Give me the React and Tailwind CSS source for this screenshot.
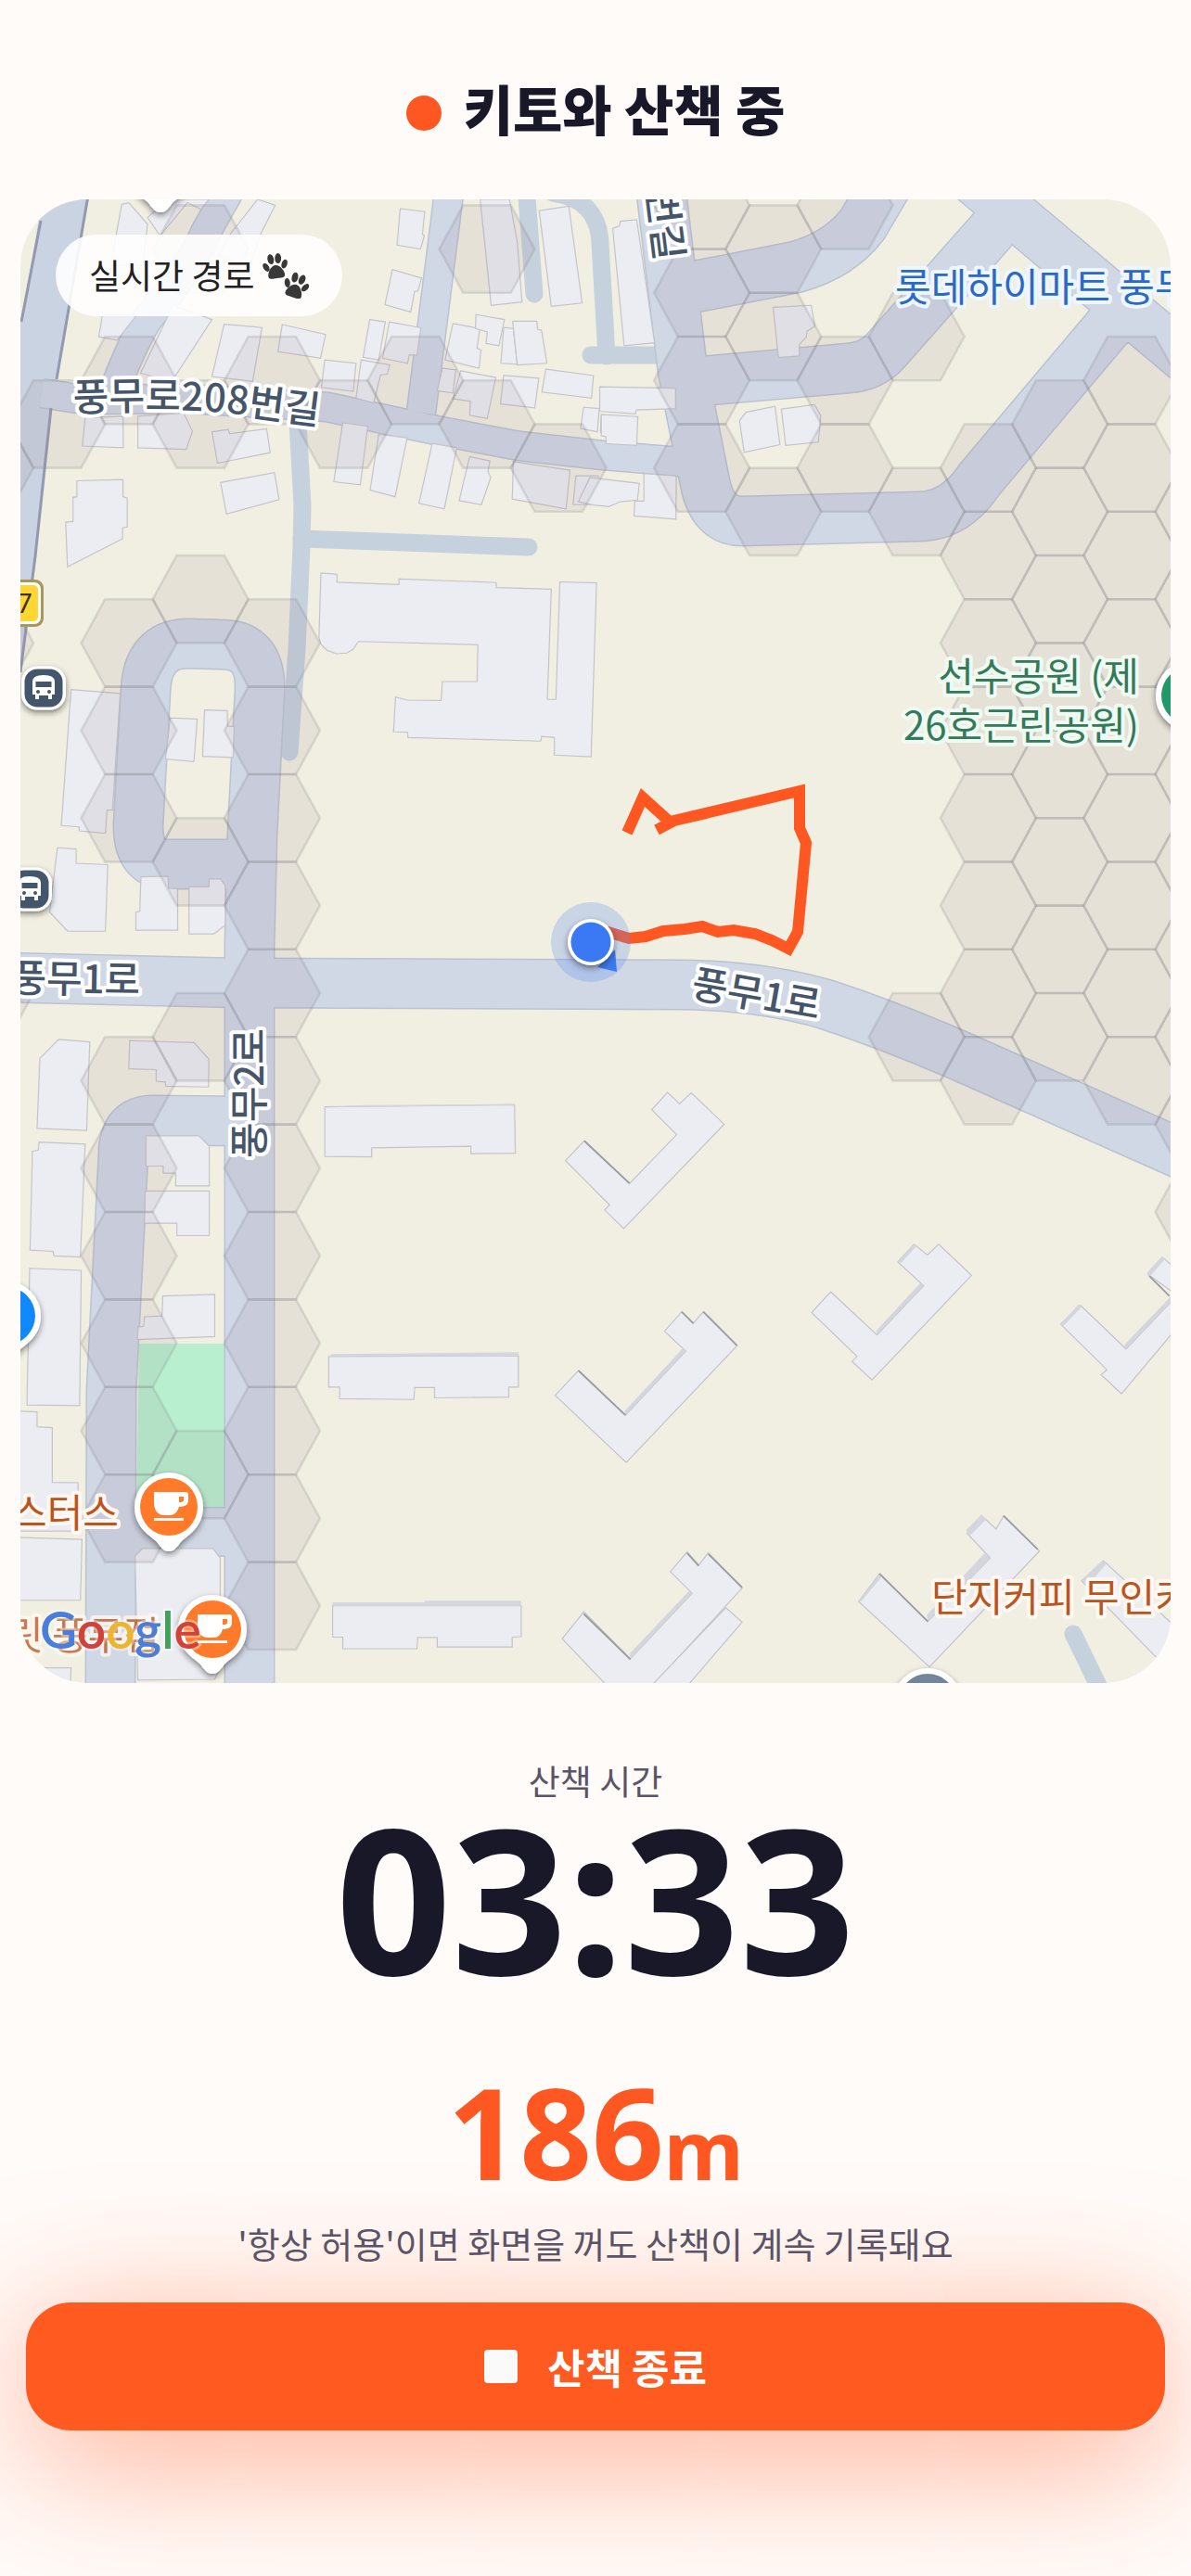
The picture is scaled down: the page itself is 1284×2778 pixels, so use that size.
import React from 'react';

const HEX_W = 77.2;
const HEX_H = 94.4;

// column index -> visited rows
const HEX_CELLS = {
  '-7': [2, 4, 8],
  '-6': [2],
  '-5': [1, 4, 5, 6, 9, 10, 11, 12, 13, 14],
  '-4': [0, 2, 4, 7, 9, 14],
  '-3': [1, 4, 5, 6, 7, 8, 9, 10, 11, 12, 13, 14, 15],
  '-2': [2],
  '-1': [1],
  0: [0, 2],
  1: [2],
  3: [-1, 0, 1, 2],
  4: [0, 1, 3],
  5: [-1, 1, 2],
  6: [1, 3, 9],
  7: [2, 3, 4, 5, 6, 7, 8, 9],
  8: [2, 3, 4, 5, 6, 7, 8, 9],
  9: [1, 2, 3, 4, 5, 6, 7, 8, 9],
  10: [3, 4, 5, 6, 7, 8, 9, 10, 11],
};

const ROADS = [
  { d: 'M45 424 L90 431 L200 430 L353 439 L470 464 L560 481 L650 491 L745 499', w: 30 },
  { d: 'M250 200 L222 250 Q205 290 159 344 Q140 375 122 425', w: 31 },
  { d: 'M485 200 L454 445', w: 30 },
  { d: 'M269 1830 L269 1020 L272 900 L280 745 Q282 695 238 695 L202 694 Q159 695 157 745 L149 890 Q149 932 180 932 L272 932', w: 52 },
  { d: 'M0 1054 L260 1060 L735 1062 Q820 1063 890 1083 Q960 1106 1040 1141 L1290 1252', w: 52 },
  { d: 'M268 1209 L165 1208 Q133 1208 133 1245 L120 1500 L119 1830', w: 52 },
  { d: 'M119 1652 L268 1652', w: 51 },
  { d: 'M712 200 L736 400 L760 520 Q768 562 800 562 L992 557 Q1030 556 1056 517 L1195 352 L1225 330', w: 52 },
  { d: 'M1030 178 L1290 397', w: 51 },
  { d: 'M1085 228 L1068 250 L955 378 Q940 395 915 397 L745 412', w: 52 },
  { d: 'M740 311 L858 288 Q905 275 930 242 L956 198', w: 54 },
];

const LANES = [
  'M567 200 L576 317',
  'M596 208 Q645 215 647 262 L654 384',
  'M637 383 L706 383',
  'M321 455 L326 545 L325 590 L320 700 L312 811',
  'M325 581 L570 590',
  'M1157 1762 L1190 1830',
];

const TILES = [
  {
    transform: 'translate(0 40) scale(.4209 .3571)',
    buildings: [
      '312,505 330,500 378,565 365,690 283,690',
      '378,545 430,490 535,490 515,520 480,500 410,600',
      '593,590 660,490 705,508 665,600 640,700 560,660',
      '262,840 350,840 300,915 253,905',
      '1025,518 1088,527 1082,595 1087,600 1077,640 1017,628',
      '1005,702 1080,728 1070,768 1062,768 1052,830 986,808',
      '1230,490 1305,490 1325,620 1337,800 1258,810',
      '1381,524 1457,511 1491,803 1412,813',
      '947,853 987,860 970,975 930,967',
      '997,860 1078,878 1068,960 1048,960 1044,985 980,970',
      '1160,865 1229,880 1222,940 1232,945 1227,1000 1140,975',
      '1219,838 1292,853 1278,932 1245,925 1248,890 1218,880',
      '1290,877 1315,880 1325,988 1283,985',
      '1313,858 1375,858 1377,883 1387,885 1401,985 1325,990',
      '443,810 543,853 440,1040 360,1015',
      '574,867 671,877 647,1040 543,1025',
      '723,868 834,898 821,970 758,958 712,950',
      '832,975 912,985 905,1070 823,1058',
      '925,975 998,990 992,1018 975,1020 957,1105 912,1090',
      '1133,1000 1168,1005 1160,1075 1120,1068',
      '1180,1008 1270,1028 1248,1152 1203,1142 1205,1100 1160,1092',
      '1290,1022 1380,1030 1370,1120 1282,1108',
      '1398,1003 1520,1022 1515,1090 1388,1072',
      '1495,1118 1535,1122 1530,1192 1487,1182',
      '1538,1060 1600,1062 1600,1130 1536,1122',
      '1540,1145 1600,1145 1600,1225 1555,1225 1552,1195 1538,1192',
      '218,1150 315,1145 316,1240 211,1235',
      '353,1145 470,1135 493,1190 477,1245 353,1240',
      '543,1192 585,1185 588,1198 683,1183 692,1255 557,1287',
      '565,1345 703,1315 715,1397 580,1440',
      '197,1340 315,1336 315,1388 326,1392 326,1480 314,1482 314,1515 173,1600 168,1465 187,1463 187,1390 197,1388',
      '878,1165 942,1175 923,1352 855,1343',
      '970,1200 1043,1210 1012,1388 948,1368',
      '1107,1227 1170,1240 1138,1425 1073,1408',
      '1203,1267 1255,1280 1250,1312 1257,1330 1233,1412 1176,1400',
      '1315,1282 1460,1308 1450,1425 1312,1395',
      '1475,1325 1532,1325 1535,1345 1555,1345 1555,1412 1468,1412',
    ],
  },
  {
    transform: 'translate(640 200) scale(.4107 .3571)',
    buildings: [
      '50,130 68,122 70,108 113,103 160,475 80,484',
      '471,368 571,362 581,425 560,440 558,458 540,480 540,515 485,520',
      '383,710 400,685 476,667 489,783 395,806',
      '493,675 580,662 596,695 590,775 504,785',
      '16,608 215,612 215,674 112,678 110,690 16,682',
      '20,692 116,698 113,785 33,780 32,758 20,756',
      '132,870 217,877 216,1008 106,998 108,953 132,953',
      '-10,882 120,900 115,950 70,955 40,970 0,965 -40,955',
    ],
  },
  {
    transform: 'translate(0 580) scale(.4209 .3571)',
    buildings: [
      '822,106 863,110 863,134 1022,141 1022,124 1271,135 1271,150 1412,155 1402,488 1424,488 1434,133 1528,136 1514,661 1420,656 1420,603 1387,600 1385,614 1045,603 1044,587 1008,586 1013,481 1044,490 1130,491 1133,434 1222,434 1224,323 918,313 905,336 888,348 862,350 838,340 822,322 817,300',
      '182,458 308,470 288,822 274,822 270,892 203,885 203,873 157,869',
      '436,544 505,547 497,676 424,668',
      '524,520 582,522 583,568 600,570 597,663 519,660',
      '147,936 195,940 195,983 276,987 270,1188 173,1188 127,1130',
      '361,1024 430,1022 432,1058 455,1060 455,1185 348,1185 348,1130 358,1128',
      '484,1054 535,1054 536,1030 565,1030 577,1050 577,1170 548,1196 484,1196',
    ],
  },
  {
    transform: 'translate(0 1120) scale(.4209 .4464)',
    buildings: [
      '150,2 230,8 222,222 95,217 102,48',
      '332,5 497,10 535,50 534,117 425,115 423,105 400,103 400,75 330,73',
      '374,235 510,235 536,260 536,356 450,356 450,325 418,325 418,308 374,308',
      '372,368 536,368 536,476 453,476 453,446 370,446',
      '417,622 550,618 550,720 352,727 354,697 368,695 370,672 415,670',
      '100,250 218,255 206,528 138,525 136,514 77,511 83,272 98,270',
      '76,555 208,560 204,887 69,885',
      '40,900 95,902 95,938 134,940 134,1072 200,1073 198,1190 40,1190',
      '40,1205 210,1210 206,1357 40,1357',
      '40,1520 182,1520 180,1568 40,1568',
      '365,1232 545,1232 564,1255 564,1520 550,1548 353,1550 346,1250',
      '832,165 1318,160 1320,277 1206,278 1206,260 952,264 952,286 832,285',
      '842,768 1328,766 1328,842 1303,842 1303,866 1113,868 1113,843 1062,843 1060,872 870,870 870,842 842,842',
      '852,1370 1335,1370 1335,1445 1312,1446 1312,1470 1120,1470 1120,1447 1070,1447 1068,1474 878,1474 878,1446 852,1446',
    ],
    shades: [
      '842,768 850,762 1328,758 1328,766',
      '852,1371 852,1362 1088,1362 1088,1358 1335,1358 1335,1371',
      '832,166 934,161 1318,158 1318,161',
    ],
  },
  {
    transform: 'translate(580 1120) scale(.449 .4464)',
    buildings: [
      '66,295 111,247 220,350 333,232 273,172 311,130 340,158 368,131 447,207 206,459 160,414 172,402',
      '41,862 97,802 210,910 355,755 304,707 345,660 373,688 397,660 478,742 212,1024',
      '657,662 703,612 814,716 926,597 864,540 903,497 935,523 962,497 1041,572 802,825 754,780 766,768',
      '1255,690 1303,645 1412,750 1535,620 1465,570 1502,530 1600,620 1401,858 1352,812 1366,800',
      '58,1450 110,1385 222,1498 370,1340 318,1288 358,1240 386,1272 409,1242 490,1328 270,1568 170,1568',
      '451,1375 490,1410 355,1568 268,1568',
      '770,1360 820,1293 936,1408 1086,1255 1030,1195 1065,1152 1100,1185 1118,1153 1204,1238 940,1518',
      '1305,1310 1358,1262 1540,1430 1520,1520 1480,1490',
    ],
    shades: [
      '864,540 903,497 910,500 872,542',
      '814,716 926,597 918,590 812,706',
      '1412,750 1535,620 1520,622 1408,740',
      '1255,690 1298,642 1306,648 1262,694',
      '1462,566 1498,526 1506,532 1470,574',
      '210,910 355,755 348,748 208,900',
      '222,1498 370,1340 362,1335 220,1486',
      '770,1360 820,1293 824,1302 776,1360',
      '936,1408 1086,1255 1072,1244 934,1392',
      '1028,1188 1065,1150 1076,1162 1036,1202',
      '1305,1310 1355,1260 1364,1270 1322,1318',
    ],
    edges: [
      '111,247 220,350',
      '97,802 210,910',
      '397,660 478,742',
      '345,660 373,688',
      '110,1390 222,1500',
      '409,1245 490,1326',
      '358,1243 386,1274',
      '820,1293 936,1408',
      '1118,1153 1200,1234',
      '1468,574 1516,622',
    ],
  },
];

const HexGrid = () => (
  <g fill="#927b88" fillOpacity=".12" stroke="#7c7c80" strokeOpacity=".2" strokeWidth="2.6">
    {Object.entries(HEX_CELLS).flatMap(([col, rows]) =>
      rows.map((row) => {
        const i = Number(col);
        const cx = 525 + HEX_W * i;
        const cy = 268.6 + HEX_H * row + (i % 2 !== 0 ? HEX_H / 2 : 0);
        const h = HEX_H / 2;
        const points = [
          [cx - 51.5, cy],
          [cx - 25.7, cy - h],
          [cx + 25.7, cy - h],
          [cx + 51.5, cy],
          [cx + 25.7, cy + h],
          [cx - 25.7, cy + h],
        ].join(' ');
        return <polygon key={`${col}:${row}`} points={points} />;
      })
    )}
  </g>
);

const Pin = ({ x, y, color, children }) => (
  <g transform={`translate(${x} ${y})`}>
    <path
      d="M0 48 C-6 48 -9 43 -13 38 C-18 32 -37 24 -37 0 A37 37 0 0 1 37 0 C37 24 18 32 13 38 C9 43 6 48 0 48Z"
      fill="#fff"
      filter="url(#pinShadow)"
    />
    <circle r="31" fill={color} />
    {children}
  </g>
);

const Cup = () => (
  <g>
    <path d="M-16 -16 H18 A3 3 0 0 1 21 -13 V-7 C21 -2 17 0 11 0 C9 6 6 9 1 9 H-5 C-12 9 -16 3 -16 -4Z" fill="#fff" />
    <path d="M11 -11 H16 V-7 Q16 -5 11 -5Z" fill="#ff7a29" />
    <rect x="-16" y="12" width="32" height="3" fill="#fff" />
  </g>
);

const BusStop = ({ x, y }) => (
  <g transform={`translate(${x} ${y})`}>
    <rect x="-24" y="-23.5" width="48" height="47" rx="17" fill="#fff" filter="url(#pinShadow)" />
    <rect x="-20.5" y="-20.5" width="41" height="41" rx="14" fill="#44566c" />
    <path d="M-12 -7 Q-12 -14 0 -14 Q12 -14 12 -7 V7 H9 V12 H5 V8 H-5 V12 H-9 V7 H-12Z" fill="#fff" />
    <rect x="-8.500" y="-7" width="17" height="6" fill="#44566c" />
    <circle cx="-6" cy="4" r="2" fill="#44566c" />
    <circle cx="6" cy="4" r="2" fill="#44566c" />
  </g>
);

const WalkMap = () => (
  <svg
    viewBox="22 215 1240 1600"
    preserveAspectRatio="xMidYMid slice"
    role="img"
    aria-label="산책 지도"
    className="block h-full w-full font-['Noto_Sans_CJK_KR',sans-serif]"
  >
    <defs>
      <filter id="pinShadow" x="-30%" y="-30%" width="160%" height="160%">
        <feDropShadow dx="0" dy="3" stdDeviation="3" floodColor="#222" floodOpacity=".55" />
      </filter>
      <path id="street208" d="M79 444 Q200 439 260 447 T370 461" />
    </defs>

    <rect x="0" y="200" width="1300" height="1640" fill="#f1efe1" />
    <polygon points="150,1449 243,1449 243,1625 147,1625" fill="#b8f0cf" />

    {/* Roads */}
    <g fill="none" stroke="#c5d1dd" strokeWidth="19" strokeLinecap="round" strokeLinejoin="round">
      {LANES.map((d) => (
        <path key={d} d={d} />
      ))}
    </g>
    <path d="M48 200 L96 200 L61 409 L55 440 L38 600 L20 730 L0 730 L0 347 L23 347Z" fill="#cad3e2" />
    <g fill="none" stroke="#b9c3d1" strokeLinejoin="round">
      {ROADS.map((r) => (
        <path key={r.d} d={r.d} strokeWidth={r.w + 3} />
      ))}
    </g>
    <g fill="none" stroke="#d0d8e5" strokeLinejoin="round">
      {ROADS.map((r) => (
        <path key={r.d} d={r.d} strokeWidth={r.w} />
      ))}
    </g>
    <path d="M96 205 L61 409 M55 440 L38 600 L22 725 M44 238 L23 347" fill="none" stroke="#9299b0" strokeWidth="3" />

    {/* Buildings */}
    {TILES.map((tile) => (
      <g key={tile.transform} transform={tile.transform}>
        <g fill="#ecedf3" stroke="#c4c4c9" strokeWidth="1.2">
          {tile.buildings.map((p) => (
            <polygon key={p} points={p} vectorEffect="non-scaling-stroke" />
          ))}
        </g>
        <g fill="#d5d6dd">
          {(tile.shades || []).map((p) => (
            <polygon key={p} points={p} />
          ))}
        </g>
        <g fill="none" stroke="#9b9ca2" strokeWidth="4">
          {(tile.edges || []).map((p) => (
            <polyline key={p} points={p} />
          ))}
        </g>
      </g>
    ))}

    <HexGrid />

    {/* Places */}
    <g strokeWidth="8" strokeLinejoin="round" paintOrder="stroke" fontSize="42">
      <g fill="#45566a" stroke="#fff" fontWeight="500">
        <text>
          <textPath href="#street208">풍무로208번길</textPath>
        </text>
        <text transform="translate(151 1072) rotate(1)" textAnchor="end">풍무1로</text>
        <text transform="translate(744 1075) rotate(10)">풍무1로</text>
        <text transform="translate(284 1249) rotate(-90)">풍무2로</text>
        <text transform="translate(707 282) rotate(83)" textAnchor="end">번길</text>
      </g>
      <text x="965" y="325" fill="#2c69c6" stroke="#eef6ff">롯데하이마트 풍무</text>
      <g fill="#34795a" stroke="#effaf2" textAnchor="end">
        <text x="1228" y="745">선수공원 (제</text>
        <text x="1228" y="798">26호근린공원)</text>
      </g>
      <g fill="#b9551f" stroke="#fff8f2">
        <text x="128" y="1647" textAnchor="end">스터스</text>
        <text x="1004" y="1738">단지커피 무인카페</text>
        <text x="172" y="1779" textAnchor="end" opacity=".75">릿 풍무점</text>
      </g>
    </g>

    <Pin x={173} y={181} color="#ff7a29" />
    <Pin x={7} y={1419} color="#1189fb" />
    <Pin x={1283} y={750} color="#22996b" />
    <Pin x={1000} y={1836} color="#72859a" />
    <Pin x={182} y={1625} color="#ff7a29">
      <Cup />
    </Pin>
    <Pin x={229} y={1757} color="#ff7a29">
      <Cup />
    </Pin>
    <BusStop x={47} y={742} />
    <BusStop x={32} y={959} />

    {/* Route shield */}
    <rect x="-4" y="625" width="51" height="51" rx="9" fill="#a9965a" />
    <rect x="-4" y="628" width="48" height="45" rx="7" fill="#fff" />
    <rect x="-4" y="631" width="45" height="39" rx="5" fill="#ffd633" />
    <text x="18" y="661" fontSize="30" fill="#3b3413" className="font-['Roboto',sans-serif]">7</text>

    {/* Walked route */}
    <g fill="none" stroke="#ff5722" strokeWidth="12" strokeMiterlimit="8">
      <polyline points="676,898 693,860 724,888" />
      <polyline points="708,895 727,885 862,853 862,893 869,909 860,1005 850,1023 832,1014 814,1007 791,1003 774,1005 757,999 738,1002 715,1004 696,1010 678,1012 652,1004" />
    </g>

    {/* Current position */}
    <circle cx="637" cy="1016" r="43" fill="#5b8def" fillOpacity=".27" />
    <polygon points="663,1024 644,1043 665,1048" fill="#3b78f3" />
    <circle cx="637" cy="1016" r="25" fill="#fff" filter="url(#pinShadow)" />
    <circle cx="637" cy="1016" r="21.500" fill="#3b78f3" />

    <text x="43" y="1778" fontSize="55" fontWeight="600" stroke="#fff" strokeOpacity=".4" strokeWidth="5" paintOrder="stroke" className="font-['Lato',sans-serif]">
      <tspan fill="#4a7ddc">G</tspan>
      <tspan fill="#d1423a">o</tspan>
      <tspan fill="#ecb52e">o</tspan>
      <tspan fill="#4a7ddc">g</tspan>
      <tspan fill="#43a15c">l</tspan>
      <tspan fill="#d1423a">e</tspan>
    </text>
  </svg>
);

const Paw = ({ transform }) => (
  <g transform={transform}>
    <ellipse cx="-10" cy="-1" rx="3" ry="5" transform="rotate(-25 -10 -1)" />
    <ellipse cx="-4" cy="-9" rx="3.400" ry="5.500" transform="rotate(-5 -4 -9)" />
    <ellipse cx="4" cy="-9" rx="3.400" ry="5.500" transform="rotate(8 4 -9)" />
    <ellipse cx="10" cy="-2" rx="3" ry="5" transform="rotate(28 10 -2)" />
    <path d="M0 -2 C5 -2 9 5 9 9 C9 13 4 12 0 12 C-4 12 -9 13 -9 9 C-9 5 -5 -2 0 -2Z" />
  </g>
);

const PawPrints = () => (
  <svg viewBox="0 0 50 50" className="h-[50px] w-[50px]" fill="#383838" aria-hidden="true">
    <Paw transform="translate(14 16) rotate(-8)" />
    <Paw transform="translate(36 37) rotate(18)" />
  </svg>
);

const App = () => {
  return (
    <main className="flex min-h-screen flex-col overflow-hidden bg-[#fffbf9] font-['Noto_Sans_CJK_KR',sans-serif] text-[#181829]">
      <header className="flex items-center justify-center gap-6 pt-20 pb-[63px]">
        <span className="mt-3 size-[38px] rounded-full bg-[#ff5722]" />
        <h1 className="text-[58px] leading-[72px] font-black">키토와 산책 중</h1>
      </header>

      {/* Map */}
      <section className="relative mx-[22px] aspect-[1240/1600] overflow-hidden rounded-[72px]">
        <WalkMap />
        <div className="absolute top-[38px] left-[38px] flex h-[88px] items-center gap-2 rounded-full bg-white/90 pr-9 pl-9 text-[37px] text-[#222]">
          <span>실시간 경로</span>
          <PawPrints />
        </div>
      </section>

      {/* Walk stats */}
      <section className="relative z-10 flex flex-col items-center pt-[77px]">
        <p className="text-[37px] leading-[56px] text-[#5b5468]">산책 시간</p>
        <p className="font-['Noto_Sans',sans-serif] text-[218px] leading-[196px] font-bold">03:33</p>
        <p className="mt-[83px] font-['Noto_Sans',sans-serif] text-[136px] leading-[144px] font-bold text-[#ff5722]">
          186<span className="text-[88px] leading-none">m</span>
        </p>
        <p className="mt-5 text-[38px] leading-[56px] text-[#5b5468]">'항상 허용'이면 화면을 꺼도 산책이 계속 기록돼요</p>
      </section>

      <div className="px-7 pt-9 pb-[157px]">
        <button
          type="button"
          className="flex w-full items-center justify-center gap-8 rounded-[48px] bg-[#ff5a1f] py-9 text-[44px] leading-[66px] font-bold text-white shadow-[0_28px_150px_rgba(255,87,34,0.5)]"
        >
          <span className="size-9 rounded bg-[#fafafa]" />
          산책 종료
        </button>
      </div>
    </main>
  );
};

export default App;
